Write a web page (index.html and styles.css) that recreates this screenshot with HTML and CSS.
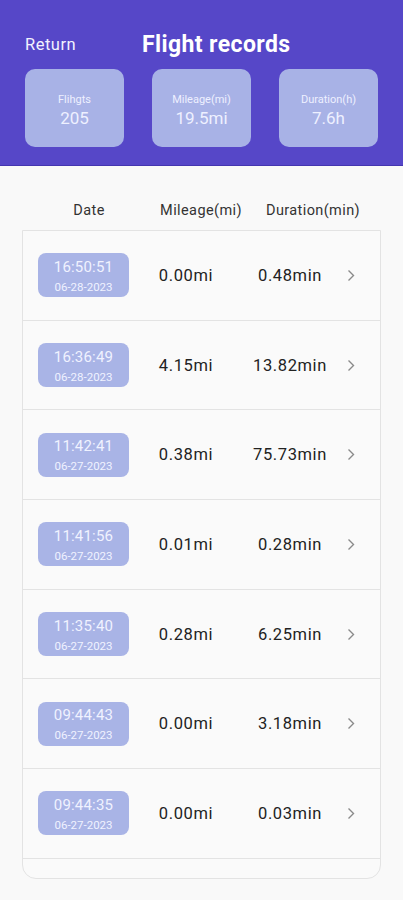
FILE: index.html
```html
<!DOCTYPE html>
<html lang="en">
<head>
    <meta charset="UTF-8">
    <meta name="viewport" content="width=device-width, initial-scale=1.0">
    <title>Flight records</title>
    <link rel="stylesheet" href="styles.css">
</head>
<body>
    <div class="header">
        <div class="top-bar">
            <span class="return">Return</span>
            <h1>Flight records</h1>
        </div>
        <div class="stats">
            <div class="stat-card">
                <span class="stat-label">Flihgts</span>
                <span class="stat-value">205</span>
            </div>
            <div class="stat-card">
                <span class="stat-label">Mileage(mi)</span>
                <span class="stat-value">19.5mi</span>
            </div>
            <div class="stat-card">
                <span class="stat-label">Duration(h)</span>
                <span class="stat-value">7.6h</span>
            </div>
        </div>
    </div>

    <div class="content">
        <div class="col-heads">
            <span class="head-date">Date</span>
            <span class="head-mileage">Mileage(mi)</span>
            <span class="head-duration">Duration(min)</span>
        </div>

        <div class="record-list">
            <div class="record">
                <div class="badge"><span class="time">16:50:51</span><span class="day">06-28-2023</span></div>
                <span class="mileage">0.00mi</span>
                <span class="duration">0.48min</span>
                <span class="chevron"><svg width="8" height="13" viewBox="0 0 8 13"><path d="M1.5 1.5 L6.5 6.5 L1.5 11.5" fill="none" stroke="#8a8a8a" stroke-width="1.4"/></svg></span>
            </div>
            <div class="record">
                <div class="badge"><span class="time">16:36:49</span><span class="day">06-28-2023</span></div>
                <span class="mileage">4.15mi</span>
                <span class="duration">13.82min</span>
                <span class="chevron"><svg width="8" height="13" viewBox="0 0 8 13"><path d="M1.5 1.5 L6.5 6.5 L1.5 11.5" fill="none" stroke="#8a8a8a" stroke-width="1.4"/></svg></span>
            </div>
            <div class="record">
                <div class="badge"><span class="time">11:42:41</span><span class="day">06-27-2023</span></div>
                <span class="mileage">0.38mi</span>
                <span class="duration">75.73min</span>
                <span class="chevron"><svg width="8" height="13" viewBox="0 0 8 13"><path d="M1.5 1.5 L6.5 6.5 L1.5 11.5" fill="none" stroke="#8a8a8a" stroke-width="1.4"/></svg></span>
            </div>
            <div class="record">
                <div class="badge"><span class="time">11:41:56</span><span class="day">06-27-2023</span></div>
                <span class="mileage">0.01mi</span>
                <span class="duration">0.28min</span>
                <span class="chevron"><svg width="8" height="13" viewBox="0 0 8 13"><path d="M1.5 1.5 L6.5 6.5 L1.5 11.5" fill="none" stroke="#8a8a8a" stroke-width="1.4"/></svg></span>
            </div>
            <div class="record">
                <div class="badge"><span class="time">11:35:40</span><span class="day">06-27-2023</span></div>
                <span class="mileage">0.28mi</span>
                <span class="duration">6.25min</span>
                <span class="chevron"><svg width="8" height="13" viewBox="0 0 8 13"><path d="M1.5 1.5 L6.5 6.5 L1.5 11.5" fill="none" stroke="#8a8a8a" stroke-width="1.4"/></svg></span>
            </div>
            <div class="record">
                <div class="badge"><span class="time">09:44:43</span><span class="day">06-27-2023</span></div>
                <span class="mileage">0.00mi</span>
                <span class="duration">3.18min</span>
                <span class="chevron"><svg width="8" height="13" viewBox="0 0 8 13"><path d="M1.5 1.5 L6.5 6.5 L1.5 11.5" fill="none" stroke="#8a8a8a" stroke-width="1.4"/></svg></span>
            </div>
            <div class="record">
                <div class="badge"><span class="time">09:44:35</span><span class="day">06-27-2023</span></div>
                <span class="mileage">0.00mi</span>
                <span class="duration">0.03min</span>
                <span class="chevron"><svg width="8" height="13" viewBox="0 0 8 13"><path d="M1.5 1.5 L6.5 6.5 L1.5 11.5" fill="none" stroke="#8a8a8a" stroke-width="1.4"/></svg></span>
            </div>
            <div class="list-end"></div>
        </div>
    </div>
</body>
</html>
```

FILE: styles.css
```css
body {
    margin: 0;
    padding: 0;
    font-family: Roboto, 'Liberation Sans', sans-serif;
    background-color: #f9f9f9;
}

.header {
    background-color: #5647c8;
    height: 166px;
    border-bottom: 1px solid #4436b0;
    box-sizing: border-box;
    padding: 30px 24px 0 25px;
}

.top-bar {
    display: flex;
    align-items: center;
    height: 28px;
}

.return {
    color: #f2f2ff;
    font-size: 16.5px;
    letter-spacing: 0.5px;
    width: 117px;
}

h1 {
    margin: 0;
    color: #fff;
    font-size: 23px;
    letter-spacing: 0.4px;
    font-weight: bold;
}

.stats {
    display: flex;
    gap: 28px;
    margin-top: 11px;
}

.stat-card {
    width: 99px;
    height: 78px;
    background-color: #a8b2e6;
    border-radius: 10px;
    display: flex;
    flex-direction: column;
    align-items: center;
    justify-content: center;
    color: #eef0ff;
}

.stat-label {
    font-size: 11px;
    margin-top: 4px;
}

.stat-value {
    font-size: 17px;
    margin-top: 2px;
}

.content {
    padding: 0 22px;
}

.col-heads {
    display: flex;
    height: 64px;
    align-items: center;
    padding-top: 24px;
    box-sizing: border-box;
    font-size: 14.5px;
    letter-spacing: 0.4px;
    color: #333;
}

.head-date {
    width: 134px;
    text-align: center;
}

.head-mileage {
    width: 90px;
    text-align: center;
    white-space: nowrap;
}

.head-duration {
    width: 134px;
    text-align: center;
    white-space: nowrap;
}

.record-list {
    border: 1px solid #e3e3e3;
    border-radius: 0 0 14px 14px;
    background-color: #fafafa;
}

.record {
    display: flex;
    align-items: center;
    height: 88.7px;
    border-bottom: 1px solid #e3e3e3;
    padding-left: 15px;
}

.badge {
    width: 91px;
    height: 44px;
    background-color: #a9b4e6;
    border-radius: 8px;
    display: flex;
    flex-direction: column;
    align-items: center;
    justify-content: center;
    color: #f0f2ff;
}

.time {
    font-size: 15px;
    letter-spacing: 0.2px;
    line-height: 18px;
    margin-top: 1px;
}

.day {
    font-size: 11.5px;
    line-height: 14px;
    margin-top: 4px;
}

.mileage {
    width: 114px;
    text-align: center;
    font-size: 16.5px;
    letter-spacing: 0.6px;
    color: #222;
}

.duration {
    width: 94px;
    text-align: center;
    font-size: 16.5px;
    letter-spacing: 0.6px;
    color: #222;
    white-space: nowrap;
}

.chevron {
    margin-left: 10px;
    display: flex;
}

.list-end {
    height: 19px;
}
```
